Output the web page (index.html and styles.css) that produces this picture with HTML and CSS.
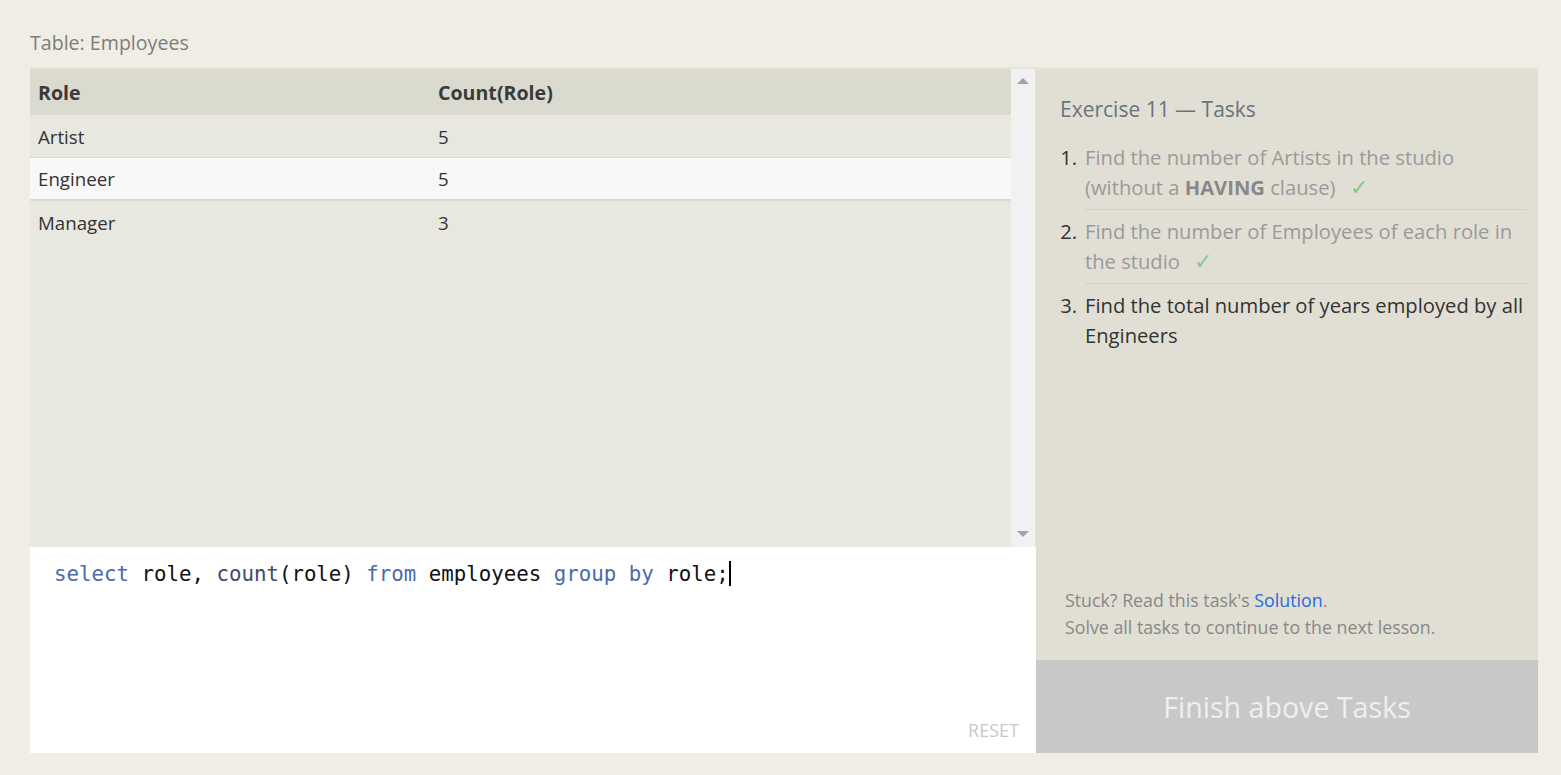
FILE: index.html
```html
<!DOCTYPE html>
<html>
<head>
<meta charset="utf-8">
<link rel="stylesheet" href="styles.css">
</head>
<body>
<div class="page">
  <div class="title">Table: Employees</div>
  <div class="main">
    <div class="left">
      <div class="results">
        <div class="table-wrap">
          <table class="data">
            <thead>
              <tr><th class="c1">Role</th><th>Count(Role)</th></tr>
            </thead>
            <tbody>
              <tr><td>Artist</td><td>5</td></tr>
              <tr class="hl"><td>Engineer</td><td>5</td></tr>
              <tr><td>Manager</td><td>3</td></tr>
            </tbody>
          </table>
        </div>
        <div class="scrollbar">
          <span class="arr up"></span>
          <span class="arr down"></span>
        </div>
      </div>
      <div class="editor">
        <div class="code"><span class="kw">select</span> role, <span class="fn">count</span>(role) <span class="kw">from</span> employees <span class="kw">group</span> <span class="kw">by</span> role;<span class="caret"></span></div>
        <div class="reset">RESET</div>
      </div>
    </div>
    <div class="right">
      <div class="tasks">
        <div class="tasks-title">Exercise 11 — Tasks</div>
        <ol class="list">
          <li class="done"><span class="num">1.</span><span class="txt">Find the number of Artists in the studio (without a <b>HAVING</b> clause) <span class="check">✓</span></span></li>
          <li class="done"><span class="num">2.</span><span class="txt">Find the number of Employees of each role in the studio <span class="check">✓</span></span></li>
          <li class="cur"><span class="num">3.</span><span class="txt">Find the total number of years employed by all Engineers</span></li>
        </ol>
        <div class="help">
          <div>Stuck? Read this task's <span class="link">Solution</span>.</div>
          <div>Solve all tasks to continue to the next lesson.</div>
        </div>
      </div>
      <div class="finish">Finish above Tasks</div>
    </div>
  </div>
</div>
</body>
</html>
```

FILE: styles.css
```css
html, body {
  margin: 0;
  padding: 0;
  background: #f0ede5;
  font-family: "Open Sans", "Noto Sans", sans-serif;
}
.page {
  padding: 29px 23px 22px 30px;
}
.title {
  font-size: 19.6px;
  color: #7d7d7d;
  line-height: 28px;
  height: 38px;
}
.main {
  display: flex;
  border-top: 2px solid #e6e4dc;
  height: 684px;
}
.left {
  width: 1006px;
  display: flex;
  flex-direction: column;
}
.results {
  height: 478px;
  display: flex;
  background: #e9e8e0;
}
.table-wrap {
  flex: 1;
}
.data {
  width: 100%;
  border-collapse: collapse;
  font-size: 18.7px;
  color: #333;
}
.data th {
  background: #dadacf;
  text-align: left;
  font-weight: 700;
  font-size: 19.6px;
  height: 43px;
  padding: 2px 8px 0;
  border-bottom: 1px solid #dedcd4;
  color: #3a3a3a;
}
.data th.c1 { width: 384px; }
.data td {
  height: 42px;
  padding: 0 8px;
  border-bottom: 1px solid #dcdcd8;
}
.data tr.hl td {
  height: 41px;
  background: #f8f8f8;
  border-bottom: 2px solid #d9d9d6;
}
.data tr:last-child td { border-bottom: none; }
.scrollbar {
  width: 25px;
  background: #f1f1f1;
  border-right: 1px solid #e6e4dc;
  display: flex;
  flex-direction: column;
  justify-content: space-between;
  align-items: center;
  padding: 9px 0 10px;
  box-sizing: border-box;
}
.arr {
  width: 0;
  height: 0;
  border-left: 6px solid transparent;
  border-right: 6px solid transparent;
}
.arr.up { border-bottom: 6px solid #a3a3a3; }
.arr.down { border-top: 6px solid #a3a3a3; }
.editor {
  flex: 1;
  background: #fff;
  display: flex;
  flex-direction: column;
  justify-content: space-between;
}
.code {
  font-family: "DejaVu Sans Mono", "Liberation Mono", monospace;
  font-size: 20.75px;
  color: #111;
  padding: 13px 0 0 24px;
  line-height: 28px;
}
.code .kw { color: #4a6aa8; }
.code .fn { color: #3e4b6e; }
.caret {
  display: inline-block;
  width: 2px;
  height: 25px;
  background: #000;
  vertical-align: -5px;
}
.reset {
  align-self: flex-end;
  font-size: 18px;
  color: #c8c8c8;
  padding: 0 17px 11px 0;
}
.right {
  width: 502px;
  display: flex;
  flex-direction: column;
}
.tasks {
  flex: 1;
  background: #e1dfd4;
  padding: 25px 11px 0 24px;
  display: flex;
  flex-direction: column;
}
.tasks-title {
  font-size: 21px;
  color: #6a737d;
  line-height: 30px;
}
.list {
  list-style: none;
  margin: 18px 0 0;
  padding: 0;
  font-size: 20.2px;
  line-height: 30px;
}
.list li {
  display: flex;
  padding: 0 0 6px 0;
}
.num {
  width: 17px;
  flex: none;
  text-align: right;
  margin-right: 8px;
  color: #333;
}
.txt {
  flex: 1;
}
.list li.done .txt { color: #9a9a9a; }
.list li.done .txt b { color: #888; }
.list li.cur .txt { color: #333; }
.list li + li {
  padding-top: 6px;
  border-top: 1px solid #d3d1c6;
  margin-left: 25px;
}
.list li + li .num { margin-left: -25px; }
.check {
  color: #8cc58c;
  margin-left: 9px;
  font-size: 22px;
  font-family: "DejaVu Sans", sans-serif;
  font-weight: 300;
}
.help {
  margin-top: auto;
  padding: 0 0 19px 5px;
  font-size: 17.8px;
  color: #888;
  line-height: 27px;
}
.link { color: #2a6ad8; }
.finish {
  height: 93px;
  background: #c8c8c8;
  color: #efefef;
  font-size: 28.6px;
  display: flex;
  align-items: center;
  justify-content: center;
}
```
